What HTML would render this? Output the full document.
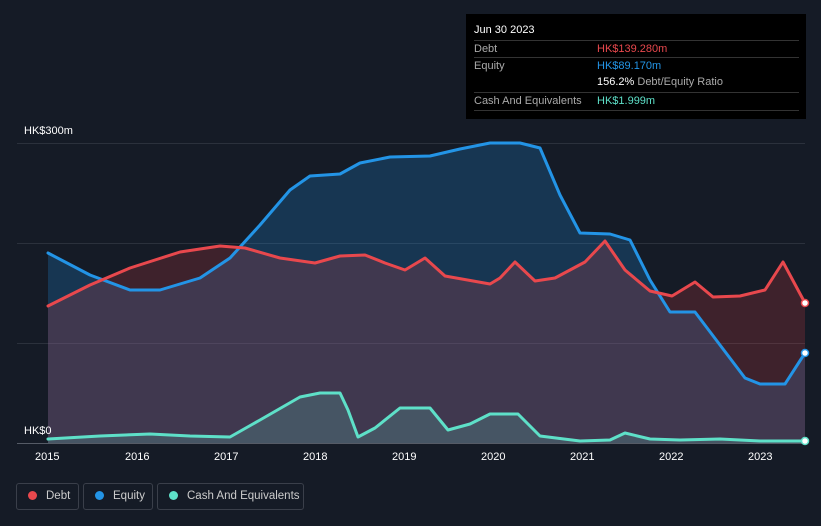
<!DOCTYPE html>
<html><head><style>
body{margin:0;background:#151b26;width:821px;height:526px;overflow:hidden;font-family:"Liberation Sans",sans-serif;position:relative}
.tt{position:absolute;left:466px;top:14px;width:340px;height:105px;background:#000;color:#fff;font-size:11px}
.row{position:absolute;left:8px;width:325px;border-top:1px solid #333;height:17px;line-height:17px}
.lg{position:absolute;top:483px;height:27px;border:1px solid #3a3f4a;border-radius:3px;color:#ccc;font-size:11.5px;line-height:25px;box-sizing:border-box;white-space:nowrap}
.lg i{display:inline-block;width:9px;height:9px;border-radius:50%;margin:0 9px 0 11px;vertical-align:-1px}
.ax{position:absolute;color:#fff;font-size:11px}
</style></head><body>
<svg width="821" height="526" style="position:absolute;left:0;top:0">
<g stroke="#2b313c" stroke-width="1"><line x1="17" y1="143.5" x2="805" y2="143.5"/><line x1="17" y1="243.5" x2="805" y2="243.5"/><line x1="17" y1="343.5" x2="805" y2="343.5"/></g>
<line x1="17" y1="443.5" x2="805" y2="443.5" stroke="#555b66"/>
<polygon fill="rgba(33,150,243,0.22)" points="48,443 48,253 90,275 130,290 160,290 200,278 230,258 260,225 290,190 310,176 340,174 360,163 390,157 430,156 460,149 490,143 520,143 540,148 560,195 580,233 610,234 630,240 650,280 670,312 695,312 720,345 745,378 760,384 785,384 805,353 805,443"/>
<polygon fill="rgba(232,64,69,0.2)" points="48,443 48,306 90,285 130,268 180,252 220,246 245,248 280,258 315,263 340,256 365,255 385,263 405,270 425,258 445,276 490,284 500,278 515,262 535,281 555,278 585,262 605,241 625,270 650,291 672,296 695,282 713,297 740,296 765,290 783,262 805,303 805,443"/>
<polygon fill="rgba(100,220,200,0.18)" points="48,443 48,439 100,436 150,434 190,436 230,437 260,420 300,397 320,393 340,393 348,410 358,437 375,428 400,408 430,408 448,430 470,424 490,414 518,414 540,436 580,441 610,440 625,433 650,439 680,440 720,439 760,441 805,441 805,443"/>
<g fill="none" stroke-width="3" stroke-linejoin="round" stroke-linecap="round">
<polyline stroke="#2394e6" points="48,253 90,275 130,290 160,290 200,278 230,258 260,225 290,190 310,176 340,174 360,163 390,157 430,156 460,149 490,143 520,143 540,148 560,195 580,233 610,234 630,240 650,280 670,312 695,312 720,345 745,378 760,384 785,384 805,353"/>
<polyline stroke="#e8484d" points="48,306 90,285 130,268 180,252 220,246 245,248 280,258 315,263 340,256 365,255 385,263 405,270 425,258 445,276 490,284 500,278 515,262 535,281 555,278 585,262 605,241 625,270 650,291 672,296 695,282 713,297 740,296 765,290 783,262 805,303"/>
<polyline stroke="#5ee0c8" points="48,439 100,436 150,434 190,436 230,437 260,420 300,397 320,393 340,393 348,410 358,437 375,428 400,408 430,408 448,430 470,424 490,414 518,414 540,436 580,441 610,440 625,433 650,439 680,440 720,439 760,441 805,441"/>
</g>
<circle cx="805" cy="303" r="3.5" fill="#fff" stroke="#e8484d" stroke-width="1.5"/>
<circle cx="805" cy="353" r="3.5" fill="#fff" stroke="#2394e6" stroke-width="1.5"/>
<circle cx="805" cy="441" r="3.5" fill="#fff" stroke="#5ee0c8" stroke-width="1.5"/>
</svg>
<div class="ax" style="left:24px;top:125px">HK$300m</div>
<div class="ax" style="left:24px;top:425px">HK$0</div>
<div class="ax" style="left:35px;top:451px">2015</div><div class="ax" style="left:125px;top:451px">2016</div><div class="ax" style="left:214px;top:451px">2017</div><div class="ax" style="left:303px;top:451px">2018</div><div class="ax" style="left:392px;top:451px">2019</div><div class="ax" style="left:481px;top:451px">2020</div><div class="ax" style="left:570px;top:451px">2021</div><div class="ax" style="left:659px;top:451px">2022</div><div class="ax" style="left:748px;top:451px">2023</div>
<div class="tt">
<div style="position:absolute;left:8px;top:10px">Jun 30 2023</div>
<div class="row" style="top:26px"><span style="color:#aaa">Debt</span><span style="position:absolute;left:123px;color:#e8484d">HK$139.280m</span></div>
<div class="row" style="top:43px"><span style="color:#aaa">Equity</span><span style="position:absolute;left:123px;color:#2394e6">HK$89.170m</span></div>
<div style="position:absolute;left:131px;top:62px;color:#fff">156.2% <span style="color:#aaa">Debt/Equity Ratio</span></div>
<div class="row" style="top:78px;border-bottom:1px solid #333"><span style="color:#aaa">Cash And Equivalents</span><span style="position:absolute;left:123px;color:#5ee0c8">HK$1.999m</span></div>
</div>
<div class="lg" style="left:16px;width:63px"><i style="background:#e8484d"></i>Debt</div>
<div class="lg" style="left:83px;width:70px"><i style="background:#2394e6"></i>Equity</div>
<div class="lg" style="left:157px;width:147px"><i style="background:#5ee0c8"></i>Cash And Equivalents</div>
</body></html>
